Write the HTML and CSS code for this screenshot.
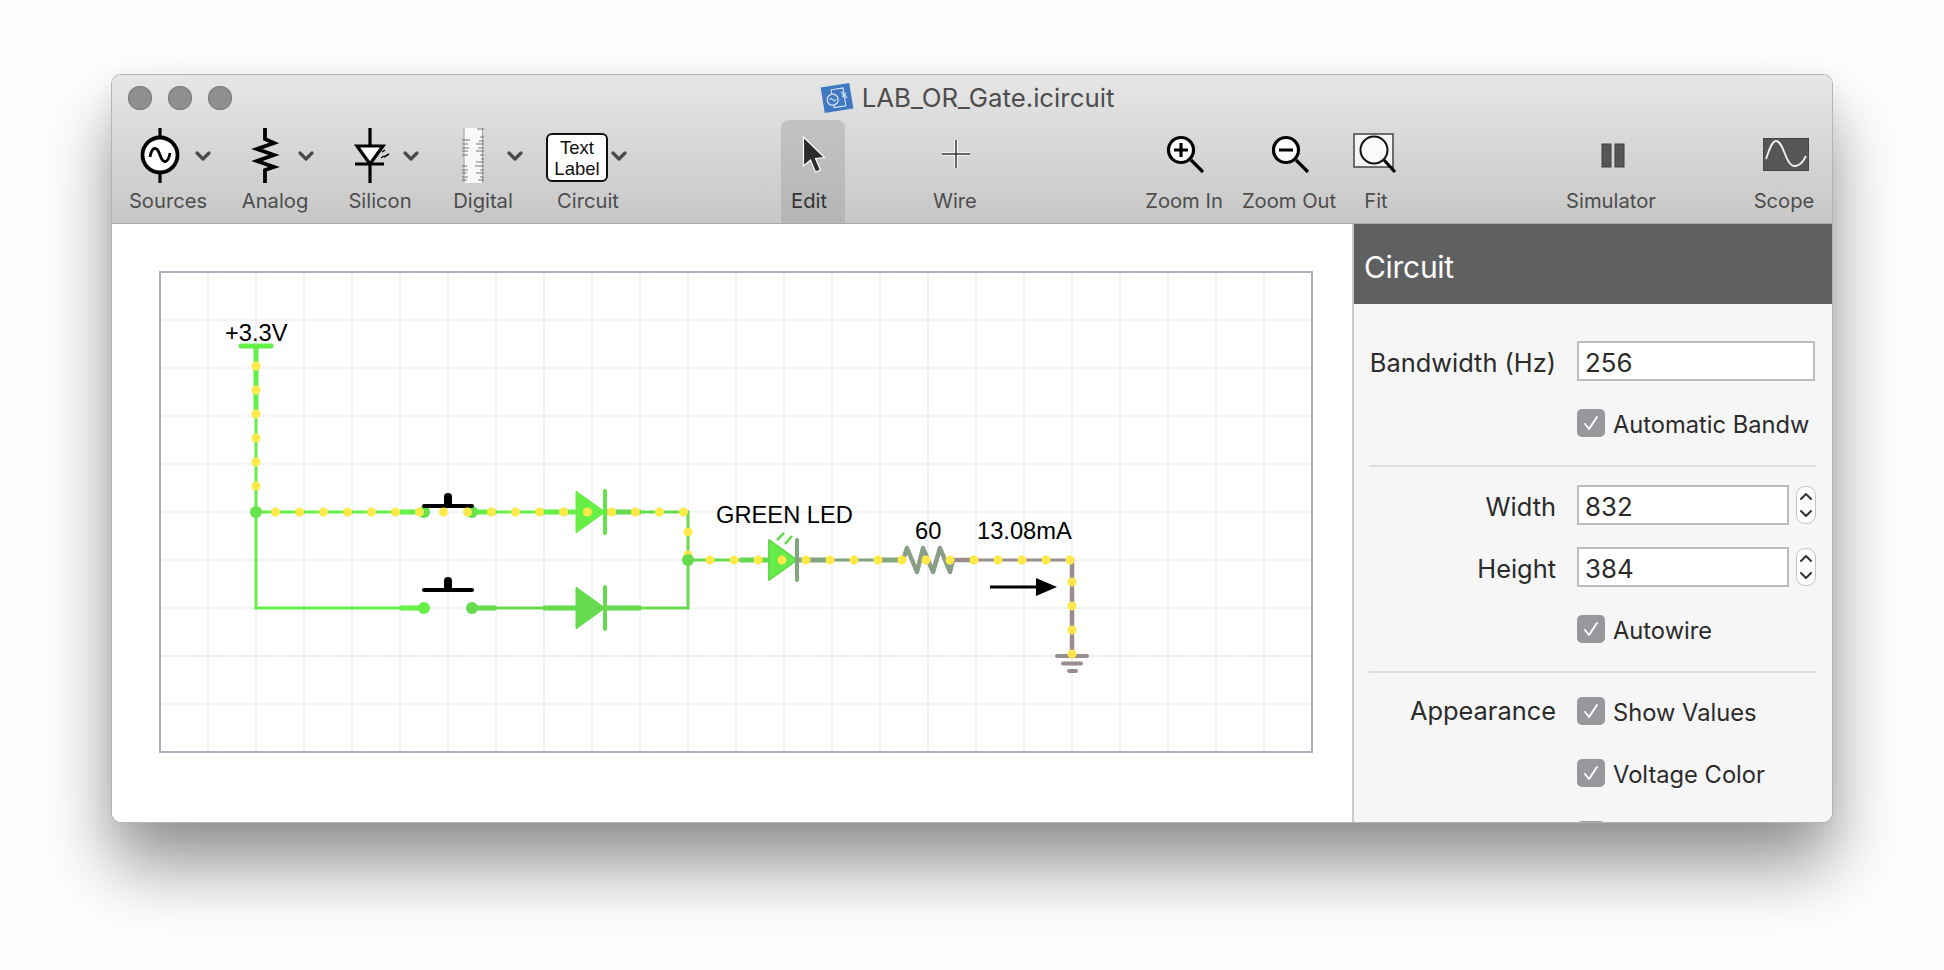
FILE: index.html
```html
<!DOCTYPE html>
<html lang="en">
<head>
  <meta charset="UTF-8">
  <title>LAB_OR_Gate.icircuit</title>
  <link rel="stylesheet" href="styles.css">
</head>
<body>
  <div class="window">
    <div class="chrome">
      <div class="titlebar">
        <div class="lights"><span></span><span></span><span></span></div>
        <svg class="doc-icon" width="34" height="32" viewBox="0 0 34 32">
          <g transform="rotate(-9 17 16)">
            <rect x="2.500" y="3" width="29" height="26" fill="#4079c2"/>
            <circle cx="12.500" cy="17" r="5.500" fill="none" stroke="#dce8f6" stroke-width="1.200"/>
            <path d="M9.500 17q1.500-3 3 0t3 0" fill="none" stroke="#dce8f6" stroke-width="1"/>
            <path d="M12.500 11.500V7h12v3.500l-2 1 4 1-4 1 4 1-4 1 4 1-2 1V25h-12v-2.500" fill="none" stroke="#dce8f6" stroke-width="1"/>
          </g>
        </svg>
        <span class="doc-title">LAB_OR_Gate.icircuit</span>
      </div>
      <div class="toolbar">
        <div class="tool tool-sources">
          <svg width="104" height="61" viewBox="116 126 104 61">
            <path class="ic" d="M160 128v10M160 172v11"/>
            <circle class="ic ic-bold" cx="160" cy="155" r="17.500" fill="#fff"/>
            <path class="ic thin" d="M150 157c2-11 7-11 10-2s8 9 10-2"/>
            <path class="chev" d="M197 153l6 6 6-6"/>
          </svg>
          <span class="tool-label">Sources</span>
        </div>
        <div class="tool tool-analog">
          <svg width="110" height="61" viewBox="220 126 110 61">
            <path class="ic ic-bold" d="M265 128v11l9 4-17 6 17 6-17 6 17 6-9 3v13"/>
            <path class="chev" d="M300 153l6 6 6-6"/>
          </svg>
          <span class="tool-label">Analog</span>
        </div>
        <div class="tool tool-silicon">
          <svg width="100" height="61" viewBox="330 126 100 61">
            <path class="ic" d="M370 128v18M370 164v19M355 164h29"/>
            <path class="ic" d="M357 146h26l-13 18z" fill="#fff"/>
            <path class="ic rays" d="M382 152l3-2M384 157l5-3M381 158l3-2"/>
            <path class="chev" d="M405 153l6 6 6-6"/>
          </svg>
          <span class="tool-label">Silicon</span>
        </div>
        <div class="tool tool-digital">
          <svg width="106" height="61" viewBox="430 126 106 61">
            <rect x="464" y="128" width="19" height="55" fill="#f8f8f8"/>
            <path d="M464 128v55M482.500 128v55" stroke="#a8a8a8" stroke-width="1.200" fill="none"/>
            <path class="ticks" d="M462 140h8M462 144h6M462 148h7M462 151h6M462 155h6M462 166h5M462 170h6M462 173h5M462 177h6M462 180h5M477 129h7M480 137h4M479 141h5M476 144h8M478 148h6M476 151h8M480 155h4M481 159h3M476 162h8M475 166h9M480 170h4M476 173h8M480 177h4M478 180h6"/>
            <path class="chev" d="M509 153l6 6 6-6"/>
          </svg>
          <span class="tool-label">Digital</span>
        </div>
        <div class="tool tool-circuit">
          <div class="icon-row">
            <div class="text-label-icon">Text<br>Label</div>
            <svg width="16" height="10" viewBox="0 0 16 10"><path class="chev" d="M2 2l6 6 6-6"/></svg>
          </div>
          <span class="tool-label">Circuit</span>
        </div>
        <div class="tool tool-edit">
          <svg width="64" height="61" viewBox="781 126 64 61">
            <path d="M803.500 137v29l7-6 5 12 5-2-5-11.500 9-1z" fill="#2b2b2b" stroke="#fff" stroke-width="1.200"/>
          </svg>
          <span class="tool-label tool-label-dark">Edit</span>
        </div>
        <div class="tool tool-wire">
          <svg width="220" height="61" viewBox="845 126 220 61">
            <path d="M956 140v28M942 154h28" stroke="#fff" stroke-width="3.500" fill="none"/>
            <path d="M956 140v28M942 154h28" stroke="#333" stroke-width="1.500" fill="none"/>
          </svg>
          <span class="tool-label">Wire</span>
        </div>
        <div class="tool tool-zoomin">
          <svg width="108" height="61" viewBox="1130 126 108 61">
            <circle class="ic" cx="1181" cy="150" r="12.500" fill="#fff"/>
            <path class="ic" d="M1191 160l12 12" stroke-width="5.500"/>
            <path class="ic" d="M1174 150h14M1181 143v14" stroke-width="5"/>
          </svg>
          <span class="tool-label">Zoom In</span>
        </div>
        <div class="tool tool-zoomout">
          <svg width="102" height="61" viewBox="1238 126 102 61">
            <circle class="ic" cx="1286" cy="150" r="12.500" fill="#fff"/>
            <path class="ic" d="M1296 160l12 12" stroke-width="5.500"/>
            <path class="ic" d="M1279 150h14" stroke-width="5"/>
          </svg>
          <span class="tool-label">Zoom Out</span>
        </div>
        <div class="tool tool-fit">
          <svg width="72" height="61" viewBox="1340 126 72 61">
            <rect x="1354" y="134" width="39" height="33" fill="#f4f4f4" stroke="#444" stroke-width="1.500"/>
            <circle cx="1374" cy="150" r="13.500" fill="#fafafa" stroke="#111" stroke-width="2"/>
            <path class="ic" d="M1384 160l11 12" stroke-width="5.500"/>
          </svg>
          <span class="tool-label">Fit</span>
        </div>
        <div class="tool tool-simulator">
          <svg width="142" height="61" viewBox="1540 126 142 61">
            <rect x="1602" y="144" width="9" height="23" fill="#565656" stroke="#3f3f3f"/>
            <rect x="1615" y="144" width="9" height="23" fill="#565656" stroke="#3f3f3f"/>
          </svg>
          <span class="tool-label">Simulator</span>
        </div>
        <div class="tool tool-scope">
          <svg width="96" height="61" viewBox="1736 126 96 61">
            <rect x="1763.500" y="138.500" width="45" height="32" fill="#565656" stroke="#444"/>
            <path d="M1766 159c3-9 6-18 10-18 8 0 9 25 19 25 5 0 8-4 11-10" fill="none" stroke="#f2f2f2" stroke-width="1.800"/>
          </svg>
          <span class="tool-label">Scope</span>
        </div>
      </div>
    </div>

    <div class="content">
      <div class="editor">
        <div class="canvas">
          <svg class="circuit" width="1152" height="480" viewBox="160 272 1152 480">
            <!-- wires -->
            <g fill="none" stroke="#66f045" stroke-width="3">
              <path d="M256 346V608H424"/>
              <path d="M256 512H424"/>
              <path d="M472 512H605"/>
            </g>
            <g fill="none" stroke="#66f045" stroke-width="5">
              <path d="M256 346V416"/>
              <path d="M400 512H424M472 512H496M543 512H576"/>
              <path d="M400 608H424"/>
              <path d="M241 346H271" stroke-linecap="round"/>
            </g>
            <g fill="none" stroke="#66da4e" stroke-width="3">
              <path d="M472 608H688V512H605"/>
              <path d="M688 560H768"/>
            </g>
            <g fill="none" stroke="#66da4e" stroke-width="5">
              <path d="M472 608H496M543 608H576M605 608H641"/>
              <path d="M605 512H641"/>
              <path d="M740 560H768"/>
            </g>

            <!-- top diode, bottom diode -->
            <path d="M576 491L605 512L576 533Z" fill="#66f045" stroke="#66f045" stroke-linejoin="round"/>
            <path d="M605 491V533" stroke="#66e24b" stroke-width="4" stroke-linecap="round"/>
            <path d="M576 587L605 608L576 629Z" fill="#66da4e" stroke="#66da4e" stroke-linejoin="round"/>
            <path d="M605 587V629" stroke="#66da4e" stroke-width="4" stroke-linecap="round"/>

            <!-- LED -->
            <path d="M769 540L797 560L769 580Z" fill="#66ec48" stroke="#66da4e" stroke-width="2" stroke-linejoin="round"/>
            <path d="M777 540L784 533M785 544L792 536" stroke="#66da4e" stroke-width="2.500"/>
            <path d="M797 540V580" stroke="#7fa67c" stroke-width="4" stroke-linecap="round"/>

            <!-- resistor branch -->
            <path d="M797 560H903" fill="none" stroke="#84a380" stroke-width="3"/>
            <path d="M799 560H830M878 560H903" fill="none" stroke="#84a380" stroke-width="5"/>
            <path d="M903 560L907 548L917 572L923 548L933 572L940 548L950 572L953 560" fill="none" stroke="#8a9e87" stroke-width="4.500" stroke-linecap="round" stroke-linejoin="round"/>
            <path d="M953 560H1072" fill="none" stroke="#988c8c" stroke-width="3"/>
            <path d="M953 560H972M1072 558V656" fill="none" stroke="#988c8c" stroke-width="4.500"/>
            <path d="M1057 656H1087M1063 663.500H1081M1069 671H1076" stroke="#988c8c" stroke-width="4" stroke-linecap="round"/>

            <!-- switches -->
            <circle cx="256" cy="512" r="6" fill="#66e24b"/>
            <circle cx="424" cy="512" r="6" fill="#66e24b"/>
            <circle cx="472" cy="512" r="6" fill="#66e24b"/>
            <circle cx="424" cy="608" r="6" fill="#66f045"/>
            <circle cx="472" cy="608" r="6" fill="#66da4e"/>
            <g fill="#000">
              <path d="M424 506H472" stroke="#000" stroke-width="4" stroke-linecap="round"/>
              <rect x="444" y="493" width="8" height="14" rx="4"/>
              <path d="M424 590H472" stroke="#000" stroke-width="4" stroke-linecap="round"/>
              <rect x="444" y="577" width="8" height="14" rx="4"/>
            </g>

            <!-- moving current dots -->
            <g fill="#ffe94a">
              <circle cx="256" cy="366" r="4.500"/><circle cx="256" cy="390" r="4.500"/><circle cx="256" cy="414" r="4.500"/>
              <circle cx="256" cy="438" r="4.500"/><circle cx="256" cy="462" r="4.500"/><circle cx="256" cy="486" r="4.500"/>
              <circle cx="275.500" cy="512" r="4.500"/><circle cx="299.500" cy="512" r="4.500"/><circle cx="323.500" cy="512" r="4.500"/>
              <circle cx="347.500" cy="512" r="4.500"/><circle cx="371.500" cy="512" r="4.500"/><circle cx="395.500" cy="512" r="4.500"/>
              <circle cx="419.500" cy="512" r="4.500"/><circle cx="443.500" cy="512" r="4.500"/><circle cx="467.500" cy="512" r="4.500"/>
              <circle cx="491.500" cy="512" r="4.500"/><circle cx="515.500" cy="512" r="4.500"/><circle cx="539.500" cy="512" r="4.500"/>
              <circle cx="563.500" cy="512" r="4.500"/><circle cx="587.500" cy="512" r="4.500"/><circle cx="611.500" cy="512" r="4.500"/>
              <circle cx="635.500" cy="512" r="4.500"/><circle cx="659.500" cy="512" r="4.500"/><circle cx="683.500" cy="512" r="4.500"/>
              <circle cx="688" cy="532" r="4.500"/><circle cx="688" cy="555" r="4.500"/>
              <circle cx="710" cy="560" r="4.500"/><circle cx="734" cy="560" r="4.500"/><circle cx="758" cy="560" r="4.500"/>
              <circle cx="782" cy="560" r="4.500"/><circle cx="806" cy="560" r="4.500"/><circle cx="830" cy="560" r="4.500"/>
              <circle cx="854" cy="560" r="4.500"/><circle cx="878" cy="560" r="4.500"/><circle cx="902" cy="560" r="4.500"/>
              <circle cx="926" cy="560" r="4.500"/><circle cx="950" cy="560" r="4.500"/><circle cx="974" cy="560" r="4.500"/>
              <circle cx="998" cy="560" r="4.500"/><circle cx="1022" cy="560" r="4.500"/><circle cx="1046" cy="560" r="4.500"/>
              <circle cx="1070" cy="560" r="4.500"/>
              <circle cx="1072" cy="582" r="4.500"/><circle cx="1072" cy="606" r="4.500"/><circle cx="1072" cy="630" r="4.500"/>
              <circle cx="1072" cy="654" r="4.500"/>
            </g>
            <circle cx="688" cy="560" r="6" fill="#66da4e"/>

            <!-- current arrow -->
            <path d="M990 587H1040" stroke="#000" stroke-width="3"/>
            <path d="M1036 578L1057 587L1036 596Z" fill="#000"/>

            <text class="part-text" x="225" y="341">+3.3V</text>
            <text class="part-text" x="716" y="523">GREEN LED</text>
            <text class="part-text" x="915" y="539">60</text>
            <text class="part-text" x="977" y="539">13.08mA</text>
          </svg>
        </div>
      </div>

      <div class="sidebar">
        <div class="side-head">Circuit</div>
        <div class="props">
          <div class="prop-row">
            <label class="prop-label">Bandwidth (Hz)</label>
            <input class="prop-input" type="text" value="256">
          </div>
          <div class="prop-row check-row">
            <span class="prop-label"></span>
            <span class="check"><svg width="18" height="18" viewBox="0 0 18 18"><path d="M3 10l4 5 8-12"/></svg></span>
            <span class="check-text">Automatic Bandw</span>
          </div>
          <div class="prop-sep"></div>
          <div class="prop-row row-width">
            <label class="prop-label">Width</label>
            <input class="prop-input prop-input-short" type="text" value="832">
            <span class="stepper"><svg width="16" height="34" viewBox="0 0 16 34"><path d="M3 11l5-5 5 5M3 23l5 5 5-5"/></svg></span>
          </div>
          <div class="prop-row row-height">
            <label class="prop-label">Height</label>
            <input class="prop-input prop-input-short" type="text" value="384">
            <span class="stepper"><svg width="16" height="34" viewBox="0 0 16 34"><path d="M3 11l5-5 5 5M3 23l5 5 5-5"/></svg></span>
          </div>
          <div class="prop-row check-row">
            <span class="prop-label"></span>
            <span class="check"><svg width="18" height="18" viewBox="0 0 18 18"><path d="M3 10l4 5 8-12"/></svg></span>
            <span class="check-text">Autowire</span>
          </div>
          <div class="prop-sep"></div>
          <div class="prop-row check-row row-appearance">
            <span class="prop-label">Appearance</span>
            <span class="check"><svg width="18" height="18" viewBox="0 0 18 18"><path d="M3 10l4 5 8-12"/></svg></span>
            <span class="check-text">Show Values</span>
          </div>
          <div class="prop-row check-row row-next">
            <span class="prop-label"></span>
            <span class="check"><svg width="18" height="18" viewBox="0 0 18 18"><path d="M3 10l4 5 8-12"/></svg></span>
            <span class="check-text">Voltage Color</span>
          </div>
          <div class="prop-row check-row row-next">
            <span class="prop-label"></span>
            <span class="check"></span>
          </div>
        </div>
      </div>
    </div>
  </div>
</body>
</html>
```

FILE: styles.css
```css
html, body { margin: 0; height: 100%; }
body {
  background: #fefefe;
  font-family: Inter, "Liberation Sans", sans-serif;
  overflow: hidden;
  padding: 75px 0 0 112px;
  box-sizing: border-box;
}

.window {
  width: 1720px;
  height: 747px;
  border-radius: 9px;
  overflow: hidden;
  background: #fff;
  box-shadow: 0 0 0 1px #b4b4b4, 0 44px 70px rgba(0,0,0,.42), 0 10px 30px rgba(0,0,0,.06);
}

/* title + toolbar share one gradient */
.chrome {
  background: linear-gradient(#e6e6e6, #c7c7c7);
  border-bottom: 1px solid #a8a8a8;
  height: 148px;
}
.titlebar {
  position: relative;
  height: 45px;
  display: flex;
  align-items: center;
  justify-content: center;
  padding-right: 10px;
}
.lights { position: absolute; left: 16px; top: 11px; display: flex; gap: 16px; }
.lights span {
  width: 24px; height: 24px; border-radius: 50%;
  background: #8f8f8f;
  box-shadow: inset 0 0 0 1px #7d7d7d;
}
.doc-icon { margin-right: 8px; }
.doc-title { font-size: 25.800px; color: #4d4d4d; }

.toolbar { display: flex; height: 103px; padding-left: 4px; }
.tool { display: flex; flex-direction: column; align-items: center; box-sizing: border-box; padding-top: 6px; }
.tool svg { display: block; }
.tool-label { font-size: 20.200px; line-height: 28px; color: #4d4d4d; white-space: nowrap; }
.tool-label-dark { color: #333; }

.tool-sources { width: 104px; }
.tool-analog { width: 110px; }
.tool-silicon { width: 100px; }
.tool-digital { width: 106px; }
.tool-circuit { width: 104px; }
.tool-edit {
  width: 64px;
  margin-left: 141px;
  border-radius: 8px 8px 0 0;
  background: linear-gradient(#c2c2c2, #b6b6b6);
}
.tool-edit .tool-label { margin-right: 8px; }
.tool-wire { width: 220px; }
.tool-zoomin { width: 108px; margin-left: 65px; }
.tool-zoomout { width: 102px; }
.tool-fit { width: 72px; }
.tool-simulator { width: 142px; margin-left: 128px; }
.tool-scope { width: 96px; margin-left: 54px; }

.icon-row { height: 61px; display: flex; align-items: flex-start; gap: 3px; padding-left: 10px; width: 100%; box-sizing: border-box; }
.icon-row svg { margin-top: 25px; }
.text-label-icon {
  width: 62px; height: 49px;
  margin-top: 7px;
  box-sizing: border-box;
  background: #fff;
  border: 2px solid #111;
  border-radius: 6px;
  font: 18.500px/21px "Liberation Sans", sans-serif;
  color: #111;
  text-align: center;
  padding-top: 2px;
}

.ic { fill: none; stroke: #000; stroke-width: 3.200; }
.ic[fill] { fill: #fff; }
.ic-bold { stroke-width: 3.800; }
.ic.thin { stroke-width: 2.800; }
.ic.rays { stroke-width: 1.500; }
.chev { fill: none; stroke: #4a4a4a; stroke-width: 3.200; stroke-linecap: round; stroke-linejoin: round; }
.ticks { fill: none; stroke: #777; stroke-width: 1; }

.content { display: flex; height: 598px; }
.editor { flex: 1; padding: 48px 0 0 48px; background: #fff; }
.canvas {
  width: 1152px;
  height: 480px;
  box-shadow: 0 0 0 1px #abafbf, inset 0 0 0 1px #abafbf;
  background-color: #fff;
  background-image:
    linear-gradient(90deg, #eeeff5 2px, transparent 2px),
    linear-gradient(#eeeff5 2px, transparent 2px),
    linear-gradient(90deg, #f3f4f8 2px, transparent 2px),
    linear-gradient(#f3f4f8 2px, transparent 2px);
  background-size: 384px 384px, 384px 384px, 48px 48px, 48px 48px;
  background-position: -1px -1px;
}
.circuit { display: block; }
.part-text { font: 23.700px "Liberation Sans", sans-serif; fill: #000; }

.sidebar { width: 480px; background: #f6f6f6; border-left: 2px solid #c9c9c9; box-sizing: border-box; overflow: hidden; }
.side-head {
  height: 80px;
  margin-left: -2px;
  background: #606060;
  color: #fff;
  font-size: 30px;
  line-height: 86px;
  padding-left: 12px;
  letter-spacing: -.3px;
}
.props { padding: 37px 16px 0 15px; }
.prop-row { display: flex; align-items: center; height: 40px; }
.prop-label { width: 187px; margin-right: 21px; text-align: right; font-size: 25.400px; color: #2b2b2b; padding-top: 2px; flex: none; white-space: nowrap; }
.prop-input {
  width: 238px; height: 40px;
  box-sizing: border-box;
  border: 2px solid #bcbcbc;
  background: #fff;
  font: 25.800px Inter, "Liberation Sans", sans-serif;
  color: #2b2b2b;
  padding: 3px 6px 0;
  outline: none;
}
.prop-input-short { width: 212px; }
.stepper {
  width: 18px; height: 36px;
  margin-left: 7px;
  box-sizing: content-box;
  background: #fff;
  border: 1px solid #c4c4c4;
  border-radius: 9px;
  display: flex; align-items: center; justify-content: center;
}
.stepper path { fill: none; stroke: #333; stroke-width: 2; stroke-linecap: round; stroke-linejoin: round; }

.check-row { height: 28px; margin-top: 28px; }
.check {
  width: 28px; height: 28px;
  border-radius: 5px;
  background: #97979c;
  display: flex; align-items: center; justify-content: center;
  flex: none;
}
.check path { fill: none; stroke: #fff; stroke-width: 2; stroke-linecap: round; stroke-linejoin: round; }
.check-text { margin-left: 8px; font-size: 23.700px; color: #2b2b2b; padding-top: 2px; white-space: nowrap; }

.prop-sep { height: 2px; background: #dedede; margin-top: 28px; }
.row-width { margin-top: 18px; }
.row-height { margin-top: 22px; }
.row-appearance { margin-top: 24px; }
.row-appearance .prop-label { padding-top: 0; padding-bottom: 2px; }
.row-next { margin-top: 34px; }
```
